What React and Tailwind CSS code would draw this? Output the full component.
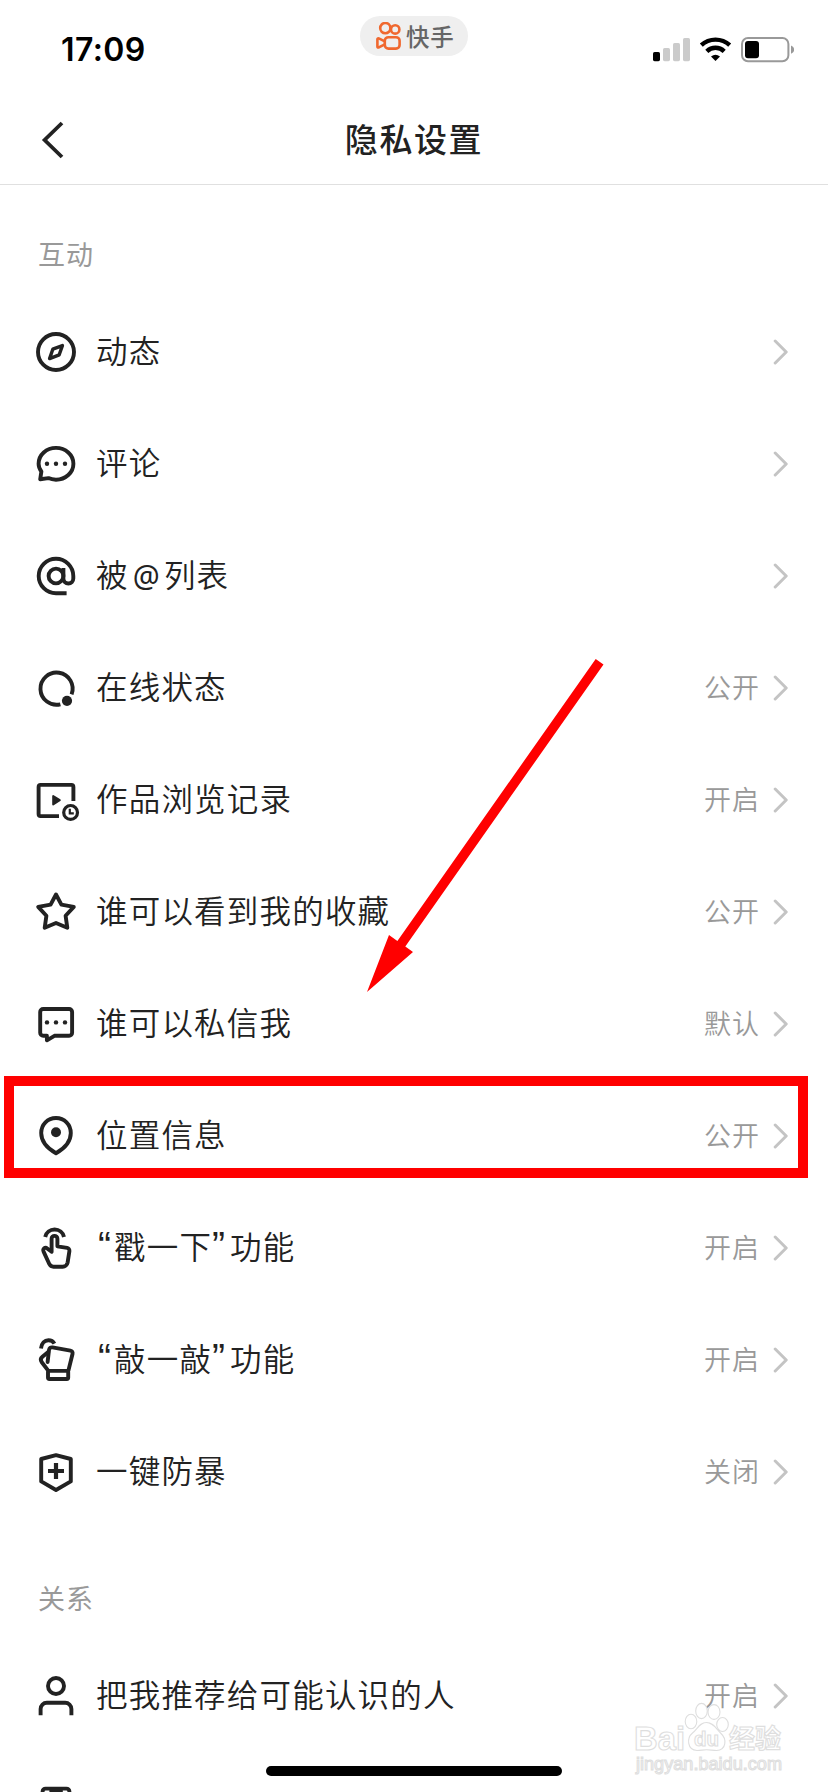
const icons = {
  compass: (
    <>
      <circle cx="24" cy="24" r="18" />
      <path d="M30.4 17.6 L27.2 26.8 L17.6 30.6 L20.8 21.2 Z" strokeWidth="3.4" />
    </>
  ),
  comment: (
    <>
      <path d="M8.2 39.2 L9.4 31.4 C7.6 29.2 6.6 26.6 6.6 23.7 C6.6 14.8 14.4 7.9 24 7.9 S41.4 14.8 41.4 23.7 S33.6 39.7 24 39.7 C21.3 39.7 18.7 39.2 16.4 38.1 Z" />
      <Dots y={23.7} />
    </>
  ),
  at: (
    <>
      <circle cx="24" cy="24" r="7.4" />
      <path d="M34.6 41.3 H24 A17.3 17.3 0 1 1 41.3 24 V26.6 A4.9 4.9 0 0 1 31.4 26.6 V16" strokeLinecap="butt" />
    </>
  ),
  online: (
    <>
      <path d="M39.6 30.4 A16.1 16.1 0 1 0 28.4 40.3" strokeLinecap="butt" />
      <circle cx="35" cy="36.8" r="5.1" fill="currentColor" stroke="none" />
    </>
  ),
  history: (
    <>
      <path d="M27 40.1 H8.6 A2 2 0 0 1 6.6 38.1 V10.9 A2 2 0 0 1 8.6 8.9 H39.4 A2 2 0 0 1 41.4 10.9 V25" strokeLinecap="butt" />
      <path d="M21.2 20 V28.4 L27.8 24.2 Z" fill="currentColor" strokeWidth="2" />
      <circle cx="38.6" cy="36.4" r="6.9" strokeWidth="3.2" />
      <path d="M37.8 32.8 V37.4 H41.8" strokeWidth="2.2" strokeLinecap="butt" strokeLinejoin="miter" />
    </>
  ),
  star: (
    <path d="M24 6.5 L29.4 16.6 L41.8 18.9 L33.6 27.8 L35.3 39.8 L24 35 L12.7 39.8 L14.4 27.8 L6.2 18.9 L18.6 16.6 Z" />
  ),
  message: (
    <>
      <path d="M14.9 40.3 V35.8 H11.2 A3 3 0 0 1 8.2 32.8 V12 A3 3 0 0 1 11.2 9 H37.1 A3 3 0 0 1 40.1 12 V32.8 A3 3 0 0 1 37.1 35.8 H22.4 Z" />
      <Dots y={22.4} />
    </>
  ),
  pin: (
    <>
      <path d="M24 41.2 C17.6 37.6 9.2 30.8 9.2 21 C9.2 12.4 15.6 6 24 6 S38.8 12.4 38.8 21 C38.8 30.8 30.4 37.6 24 41.2 Z" />
      <circle cx="24" cy="20.3" r="5" fill="currentColor" stroke="none" />
    </>
  ),
  poke: (
    <>
      <path d="M13.2 13 A9.6 9.4 0 0 1 32 13" strokeLinecap="butt" />
      <path d="M19.6 27.8 V14.8 A2.9 2.9 0 0 1 25.4 14.8 V22.3 L35.2 23.9 A2.8 2.8 0 0 1 37.4 27.1 L35.6 38.6 A5 5 0 0 1 30.6 42.7 H21.6 A4.6 4.6 0 0 1 17.4 40.2 L11.6 27.6 C10.4 24.8 13.2 22.8 15.2 24.4 Z" />
    </>
  ),
  knock: (
    <>
      <path d="M9 12.4 C9.6 7.4 12.6 4.2 16.4 4.2 C19.2 4.2 21.2 5.4 22.4 7.6" strokeLinecap="butt" />
      <path d="M15.6 26 L17 14 C17.3 12 18.6 11.1 20.5 11.4 L38.4 14.7 C40.2 15 40.9 16.3 40.5 18 L36.4 34.6" />
      <path d="M16 34.4 L9.8 26.2 C8.4 24.3 8.6 22.3 10.4 20.8 L16.2 16" />
      <rect x="16" y="34.9" width="20.2" height="8.1" rx="1.4" />
    </>
  ),
  shield: (
    <>
      <path d="M24 7.2 L38.8 11 V33.4 L24 42 L9.2 33.4 V11 Z" />
      <path d="M24 15 V31 M16 23 H32" strokeWidth="4.2" strokeLinecap="butt" />
    </>
  ),
  person: (
    <>
      <circle cx="24" cy="14" r="8" />
      <path d="M8.6 43.2 V37 A6.2 6.2 0 0 1 14.8 30.8 H33.2 A6.2 6.2 0 0 1 39.4 37 V43.2" strokeLinecap="butt" />
    </>
  ),
  contacts: (
    <>
      <rect x="10.6" y="4.6" width="26.8" height="38" rx="3" />
      <path d="M17.4 6.6 H30.8" strokeWidth="5" strokeLinecap="butt" />
    </>
  ),
}

const interaction = [
  { icon: 'compass', label: '动态' },
  { icon: 'comment', label: '评论' },
  { icon: 'at', label: <>被<span className="font-['Noto_Sans'] font-normal text-[30px] ml-1 mr-[3px]">@</span>列表</> },
  { icon: 'online', label: '在线状态', value: '公开' },
  { icon: 'history', label: '作品浏览记录', value: '开启' },
  { icon: 'star', label: '谁可以看到我的收藏', value: '公开' },
  { icon: 'message', label: '谁可以私信我', value: '默认' },
  { icon: 'pin', label: '位置信息', value: '公开', marked: true },
  { icon: 'poke', label: <Quoted text="戳一下" rest="功能" />, value: '开启' },
  { icon: 'knock', label: <Quoted text="敲一敲" rest="功能" />, value: '开启' },
  { icon: 'shield', label: '一键防暴', value: '关闭' },
]

const relations = [
  { icon: 'person', label: '把我推荐给可能认识的人', value: '开启' },
  { icon: 'contacts', label: '' },
]

function Dots({ y }) {
  return (
    <g fill="currentColor" stroke="none">
      <circle cx="15" cy={y} r="2.2" />
      <circle cx="24" cy={y} r="2.2" />
      <circle cx="33" cy={y} r="2.2" />
    </g>
  )
}

function Quoted({ text, rest }) {
  return (
    <>
      <span className="inline-block w-[18px] pl-[2px] text-[39px] leading-10 tracking-normal font-['Liberation_Sans']">“</span>
      {text}
      <span className="inline-block w-[18px] text-[39px] leading-10 tracking-normal font-['Liberation_Sans']">”</span>
      {rest}
    </>
  )
}

function StatusBar() {
  return (
    <div className="flex h-24 items-start pl-[61px] pr-[34px]">
      <div className="mt-[30px] w-[299px] font-['Inter'] text-[32px] font-semibold leading-10 tracking-[0.4px] text-black">17:09</div>
      <div className="mt-4 flex h-10 w-[108px] items-center rounded-full bg-[#efefef] pl-4">
        <svg className="h-7 w-[25px] shrink-0" viewBox="0 0 25 28" fill="none" stroke="#f0682f" strokeWidth="2.6">
          <circle cx="9.3" cy="6.1" r="5.1" />
          <circle cx="19.2" cy="7.4" r="4.2" />
          <rect x="8.8" y="15.2" width="14.8" height="11.4" rx="3.6" />
          <path d="M8.8 19.4 L2.8 16.4 Q1.4 16 1.4 17.4 V24.4 Q1.4 25.8 2.8 25.4 L8.8 22.4" strokeLinejoin="round" />
        </svg>
        <span className="ml-[5px] whitespace-nowrap text-[23.5px] font-medium leading-10 tracking-[0.8px] text-[#666]">快手</span>
      </div>
      <svg className="ml-auto mt-9 h-7 w-[141px]" viewBox="653 36 141 28">
        <rect x="653" y="52" width="7" height="9.2" rx="1.6" />
        <rect x="663" y="48" width="7" height="13.2" rx="1.6" fill="#cbcbcb" />
        <rect x="673" y="43" width="7" height="18.2" rx="1.6" fill="#cbcbcb" />
        <rect x="683" y="38" width="7" height="23.2" rx="1.6" fill="#cbcbcb" />
        <g fill="none" stroke="#000" strokeWidth="4.4">
          <path d="M701.3 45.2 A21 21 0 0 1 729.7 45.2" />
          <path d="M706.8 51.3 A12.6 12.6 0 0 1 724.2 51.3" />
        </g>
        <path d="M715.5 61 L711 56.6 Q715.5 52.8 720 56.6 Z" />
        <rect x="742" y="38" width="46.4" height="23.2" rx="6" fill="none" stroke="#999" strokeWidth="2" />
        <rect x="745" y="41" width="14" height="17.2" rx="3" />
        <path d="M791 45.5 Q794.2 46.8 794.2 49.6 T791 53.7 Z" fill="#999" />
      </svg>
    </div>
  )
}

function Header() {
  return (
    <div className="flex h-[89px] items-start border-b border-[#e0e0e0] pl-10 pr-16">
      <svg className="mt-[22px] h-11 w-6" viewBox="40 118 24 44" fill="none" stroke="#222" strokeWidth="3.8">
        <path d="M62 123 L44.6 140 L62 157" />
      </svg>
      <h1 className="mt-[18px] flex-1 text-center text-[33px] font-medium leading-[48px] tracking-[1.6px]">隐私设置</h1>
    </div>
  )
}

function Row({ icon, label, value, marked }) {
  return (
    <div className="relative flex h-28 items-center pl-8 pr-10">
      <svg
        className="h-12 w-12 shrink-0"
        viewBox="0 0 48 48"
        fill="none"
        stroke="currentColor"
        strokeWidth="3.9"
        strokeLinecap="round"
        strokeLinejoin="round"
      >
        {icons[icon]}
      </svg>
      <span className="ml-4 h-[54px] flex-1 whitespace-nowrap text-[31.5px] font-[350] leading-[48px] tracking-[1.2px]">{label}</span>
      <span className="mr-[13px] h-[42px] text-[27px] font-[350] leading-10 tracking-[1px] text-[#999]">{value}</span>
      <svg className="h-7 w-[15px]" viewBox="0 0 15 28" fill="none" stroke="#c4c4c4" strokeWidth="3" strokeLinecap="round" strokeLinejoin="round">
        <path d="M2.2 3 L13.2 14 L2.2 25" />
      </svg>
      {marked && <div className="absolute left-1 top-[-4px] h-[102px] w-[804px] border-10 border-[#ff0000]" />}
    </div>
  )
}

function Section({ title, rows }) {
  return (
    <section>
      <h2 className="h-28 pl-[38px] pt-[50px] text-[27px] leading-10 tracking-[1px] text-[#999]">{title}</h2>
      {rows.map((row) => (
        <Row key={row.icon} {...row} />
      ))}
    </section>
  )
}

function Arrow() {
  return (
    <svg className="absolute left-[360px] top-[650px] h-[350px] w-[250px]" viewBox="360 650 250 350" fill="#ff0000">
      <path d="M595.7 659 L603.5 664.4 L405.3 946.5 L413 952 L367 992 L389 935 L397.4 941 Z" />
    </svg>
  )
}

function Watermark() {
  return (
    <svg className="absolute left-[630px] top-[1700px] h-[80px] w-[160px]" viewBox="630 1700 160 80">
      <g fill="#fff" stroke="#dedede" strokeWidth="1.1" className="font-['Liberation_Sans','Noto_Sans_CJK_SC',sans-serif]">
        <ellipse cx="691" cy="1721.5" rx="5.8" ry="7.2" />
        <ellipse cx="701.5" cy="1711" rx="5.8" ry="7.6" />
        <ellipse cx="714" cy="1712" rx="6" ry="7.4" />
        <ellipse cx="722.5" cy="1724.5" rx="5.8" ry="7" />
        <path d="M706.5 1722.5 C699.5 1722.5 698 1728.5 692.5 1733 C686.5 1738 687 1750 697 1750.5 C701 1750.5 703 1749.8 706.5 1749.8 C710 1749.8 713 1750.5 716.5 1750.5 C726.5 1750 727 1739 721 1733.5 C716 1729 713.5 1722.5 706.5 1722.5 Z" />
        <text x="634" y="1749.5" fontSize="33" fontWeight="700" textLength="51" lengthAdjust="spacingAndGlyphs">Bai</text>
        <text x="694" y="1746" fontSize="21" fontWeight="700" textLength="25" lengthAdjust="spacingAndGlyphs">du</text>
        <text x="729" y="1747.5" fontSize="26" fontWeight="700" textLength="52" lengthAdjust="spacingAndGlyphs">经验</text>
        <text x="636" y="1769.5" fontSize="18" textLength="146" lengthAdjust="spacingAndGlyphs">jingyan.baidu.com</text>
      </g>
    </svg>
  )
}

const App = () => {
  return (
    <div className="relative h-[1792px] w-[828px] overflow-hidden bg-white font-['Noto_Sans_CJK_SC',sans-serif] text-[#222]">
      <StatusBar />
      <Header />
      <div className="-mt-px">
        <Section title="互动" rows={interaction} />
        <Section title="关系" rows={relations} />
      </div>
      <Arrow />
      <Watermark />
      <div className="absolute left-[266px] top-[1766px] h-2.5 w-[296px] rounded-full bg-black" />
    </div>
  )
}

export default App
